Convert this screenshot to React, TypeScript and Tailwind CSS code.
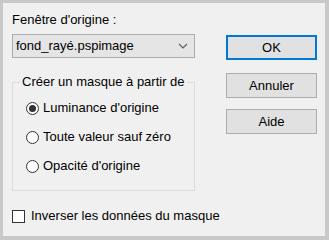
import * as React from 'react'

const font = { fontFamily: '"Liberation Sans", Arial, sans-serif' }

function Radio({ label, checked }: { label: string; checked?: boolean }) {
  return (
    <div className="flex items-center h-[16px]">
      <span className="shrink-0 w-[13px] h-[13px] rounded-full border border-[#333333] bg-white flex items-center justify-center">
        {checked && <span className="w-[7px] h-[7px] rounded-full bg-[#333333]" />}
      </span>
      <span className="ml-[4px] text-[13px] leading-[16px] text-black whitespace-nowrap">{label}</span>
    </div>
  )
}

function Button({ label, primary }: { label: string; primary?: boolean }) {
  return (
    <div
      className={
        primary
          ? 'h-[25px] w-[91px] border-2 border-[#0078d7] bg-[#e1e1e1] flex items-center justify-center text-[13px] text-black'
          : 'h-[25px] w-[91px] border border-[#adadad] bg-[#e1e1e1] flex items-center justify-center text-[13px] text-black'
      }>
      {label}
    </div>
  )
}

export default function App() {
  return (
    <div
      className="w-[329px] h-[240px] bg-[#c8c8c8] pl-[3px] pt-[3px] pr-[4px] pb-[4px]"
      style={font}>
      <div className="w-full h-full bg-[#f0f0f0] flex pl-[9px] pt-[9px]">
        <div className="w-[183px] shrink-0 flex flex-col">
          <div className="text-[13px] leading-[16px] text-black">Fenêtre d'origine :</div>
          <div className="mt-[6px] h-[24px] border border-[#acacac] bg-[#e5e5e5] flex items-center justify-between pl-[3px] pr-[6px]">
            <span className="text-[13px] text-black">fond_rayé.pspimage</span>
            <svg width="10" height="6" viewBox="0 0 10 6">
              <path d="M1 1 L5 5 L9 1" fill="none" stroke="#606060" strokeWidth="1.2" />
            </svg>
          </div>
          <fieldset className="mt-[16px] min-w-0 border border-[#dcdcdc] pb-[16px]">
            <legend className="ml-[7px] px-[2px] text-[13px] leading-[16px] text-black whitespace-nowrap">
              Créer un masque à partir de
            </legend>
            <div className="mt-[10px] pl-[13px] flex flex-col gap-[13px]">
              <Radio label="Luminance d'origine" checked />
              <Radio label="Toute valeur sauf zéro" />
              <Radio label="Opacité d'origine" />
            </div>
          </fieldset>
          <div className="mt-[17px] flex items-center h-[16px]">
            <span className="shrink-0 w-[13px] h-[13px] border border-[#333333] bg-white" />
            <span className="ml-[6px] text-[13px] leading-[16px] text-black whitespace-nowrap">
              Inverser les données du masque
            </span>
          </div>
        </div>
        <div className="ml-[31px] pt-[23px] flex flex-col">
          <Button label="OK" primary />
          <div className="mt-[13px]">
            <Button label="Annuler" />
          </div>
          <div className="mt-[11px]">
            <Button label="Aide" />
          </div>
        </div>
      </div>
    </div>
  )
}
